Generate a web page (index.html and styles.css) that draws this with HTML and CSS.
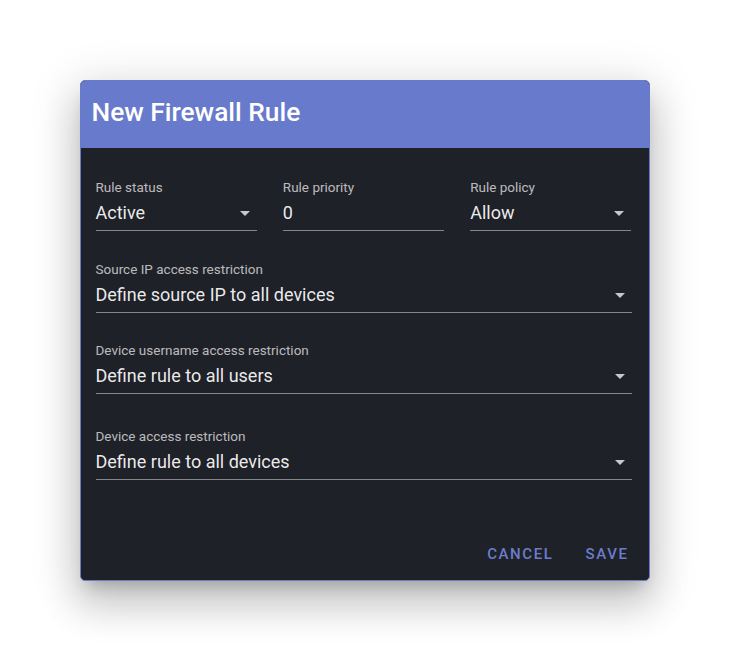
FILE: index.html
```html
<!DOCTYPE html>
<html lang="en">
<head>
<meta charset="utf-8">
<title>New Firewall Rule</title>
<link rel="stylesheet" href="styles.css">
</head>
<body>
<div class="page">
  <div class="dialog" role="dialog" aria-labelledby="dlg-title">
    <div class="dialog-header">
      <h2 id="dlg-title" class="dialog-title">New Firewall Rule</h2>
    </div>
    <div class="dialog-content">
      <div class="row row-3">
        <div class="field">
          <div class="field-label">Rule status</div>
          <div class="field-input select">
            <span class="field-value">Active</span>
            <svg class="arrow" viewBox="0 0 24 24" width="24" height="24"><path d="M7 10l5 5 5-5z"/></svg>
          </div>
        </div>
        <div class="field">
          <div class="field-label">Rule priority</div>
          <div class="field-input">
            <span class="field-value">0</span>
          </div>
        </div>
        <div class="field">
          <div class="field-label">Rule policy</div>
          <div class="field-input select">
            <span class="field-value">Allow</span>
            <svg class="arrow" viewBox="0 0 24 24" width="24" height="24"><path d="M7 10l5 5 5-5z"/></svg>
          </div>
        </div>
      </div>
      <div class="row row-2">
        <div class="field">
          <div class="field-label">Source IP access restriction</div>
          <div class="field-input select">
            <span class="field-value">Define source IP to all devices</span>
            <svg class="arrow" viewBox="0 0 24 24" width="24" height="24"><path d="M7 10l5 5 5-5z"/></svg>
          </div>
        </div>
      </div>
      <div class="row row-3b">
        <div class="field">
          <div class="field-label">Device username access restriction</div>
          <div class="field-input select">
            <span class="field-value">Define rule to all users</span>
            <svg class="arrow" viewBox="0 0 24 24" width="24" height="24"><path d="M7 10l5 5 5-5z"/></svg>
          </div>
        </div>
      </div>
      <div class="row row-4">
        <div class="field">
          <div class="field-label">Device access restriction</div>
          <div class="field-input select">
            <span class="field-value">Define rule to all devices</span>
            <svg class="arrow" viewBox="0 0 24 24" width="24" height="24"><path d="M7 10l5 5 5-5z"/></svg>
          </div>
        </div>
      </div>
    </div>
    <div class="dialog-actions">
      <button class="btn" type="button">Cancel</button>
      <button class="btn" type="button">Save</button>
    </div>
  </div>
</div>
</body>
</html>
```

FILE: styles.css
```css
* { box-sizing: border-box; }

html, body {
  margin: 0;
  padding: 0;
  background: #ffffff;
  font-family: Roboto, "Liberation Sans", Arial, sans-serif;
}

.page {
  width: 729px;
  height: 661px;
  display: flex;
  align-items: center;
  justify-content: center;
}

.dialog {
  width: 570px;
  height: 501px;
  background: #1f2128;
  border: 1px solid #6a7bcb;
  border-radius: 5px;
  overflow: hidden;
  display: flex;
  flex-direction: column;
  box-shadow:
    0 11px 15px -7px rgba(0,0,0,0.2),
    0 24px 38px 3px rgba(0,0,0,0.14),
    0 9px 46px 8px rgba(0,0,0,0.12);
}

.dialog-header {
  height: 67px;
  background: #677acb;
  display: flex;
  align-items: center;
  padding: 0 11px 5px;
}

.dialog-title {
  margin: 0;
  font-size: 26.3px;
  line-height: 32px;
  font-weight: 500;
  color: #ffffff;
  letter-spacing: 0;
}

.dialog-content {
  flex: 1;
  padding: 31px 17px 0 15px;
  display: flex;
  flex-direction: column;
}

.row { display: grid; }
.row-3 { grid-template-columns: 1fr 1fr 1fr; column-gap: 26px; }
.row-2 { margin-top: 30px; }
.row-3b { margin-top: 29px; }
.row-4 { margin-top: 34px; }

.field-label {
  font-size: 13.5px;
  line-height: 16px;
  color: rgba(255,255,255,0.7);
  margin-bottom: 6px;
  white-space: nowrap;
}

.field-input {
  position: relative;
  height: 30px;
  padding-bottom: 5px;
  border-bottom: 1px solid rgba(255,255,255,0.45);
}

.field-value {
  display: block;
  font-size: 18px;
  line-height: 24px;
  color: rgba(255,255,255,0.92);
  white-space: nowrap;
}

.arrow {
  position: absolute;
  right: 0;
  top: 0;
  fill: #c9c9cc;
}

.dialog-actions {
  height: 53px;
  display: flex;
  justify-content: flex-end;
  align-items: flex-start;
  gap: 16px;
  padding: 9px 12px 0 0;
}

.btn {
  height: 36px;
  padding: 0 8px;
  border: 0;
  background: transparent;
  color: #6b7ccb;
  font-family: Roboto, "Liberation Sans", Arial, sans-serif;
  font-size: 15px;
  font-weight: 500;
  letter-spacing: 1.6px;
  text-transform: uppercase;
  cursor: pointer;
}
```
